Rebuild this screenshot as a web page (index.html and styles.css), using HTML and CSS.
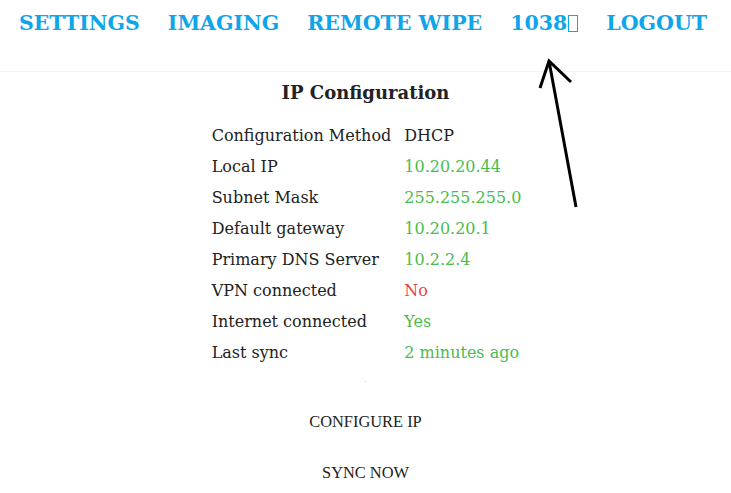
FILE: index.html
```html
<!DOCTYPE html>
<html lang="en">

<head>
    <meta charset="UTF-8">
    <meta name="viewport" content="width=device-width, initial-scale=1.0">
    <title>IP Configuration</title>
    <link rel="stylesheet" href="styles.css">
</head>

<body>
    <nav class="topnav">
        <a href="#">SETTINGS</a>
        <a href="#">IMAGING</a>
        <a href="#">REMOTE WIPE</a>
        <a href="#">1038<span class="tofu"></span></a>
        <a href="#">LOGOUT</a>
    </nav>

    <main class="content">
        <h1>IP Configuration</h1>

        <table class="ipTable">
            <tbody>
                <tr><td>Configuration Method</td><td>DHCP</td></tr>
                <tr><td>Local IP</td><td class="ok">10.20.20.44</td></tr>
                <tr><td>Subnet Mask</td><td class="ok">255.255.255.0</td></tr>
                <tr><td>Default gateway</td><td class="ok">10.20.20.1</td></tr>
                <tr><td>Primary DNS Server</td><td class="ok">10.2.2.4</td></tr>
                <tr><td>VPN connected</td><td class="bad">No</td></tr>
                <tr><td>Internet connected</td><td class="ok">Yes</td></tr>
                <tr><td>Last sync</td><td class="ok">2 minutes ago</td></tr>
            </tbody>
        </table>

        <div class="dot">.</div>

        <button class="plainButton">CONFIGURE IP</button>
        <button class="plainButton">SYNC NOW</button>
    </main>

    <svg class="arrow" width="731" height="493" viewBox="0 0 731 493">
        <path d="M576 207 L549 61 M540 88 L549 61 L571 82" fill="none" stroke="#000" stroke-width="3"/>
    </svg>
</body>

</html>
```

FILE: styles.css
```css
/* CSS Reset */
* {
    margin: 0;
    padding: 0;
    box-sizing: border-box;
}

body {
    font-family: 'DejaVu Serif', serif;
    background-color: #fff;
    color: #222;
    position: relative;
}

.topnav {
    display: flex;
    justify-content: center;
    gap: 28px;
    height: 72px;
    padding-top: 10px;
    padding-right: 5px;
    border-bottom: 1px solid #f2f2f2;
}

.topnav a {
    color: #0ea5e9;
    font-weight: bold;
    font-size: 20.5px;
    text-decoration: none;
    line-height: 26px;
}

.tofu {
    display: inline-block;
    width: 10px;
    height: 17px;
    border: 1px solid #0ea5e9;
    margin-left: 1px;
    vertical-align: -2px;
}

.content {
    display: flex;
    flex-direction: column;
    align-items: center;
}

h1 {
    font-size: 18px;
    margin-top: 10px;
    margin-bottom: 16px;
    line-height: 22px;
}

.ipTable {
    border-collapse: collapse;
    font-size: 16px;
    margin-left: 2px;
}

.ipTable td {
    height: 31px;
    padding: 0;
    vertical-align: middle;
}

.ipTable td:first-child {
    padding-right: 13px;
}

.ok {
    color: #4cbb4c;
}

.bad {
    color: #e04848;
}

.dot {
    font-size: 6px;
    color: #888;
    margin-top: 8px;
    height: 20px;
}

.plainButton {
    font-family: 'Liberation Serif', serif;
    font-size: 16.4px;
    color: #222;
    background: none;
    border: none;
    padding: 0;
    line-height: 20px;
    margin-top: 16px;
    margin-bottom: 14px;
    cursor: pointer;
}

.plainButton:last-child {
    margin-top: 17px;
}

.arrow {
    position: absolute;
    left: 0;
    top: 0;
    pointer-events: none;
}
```
